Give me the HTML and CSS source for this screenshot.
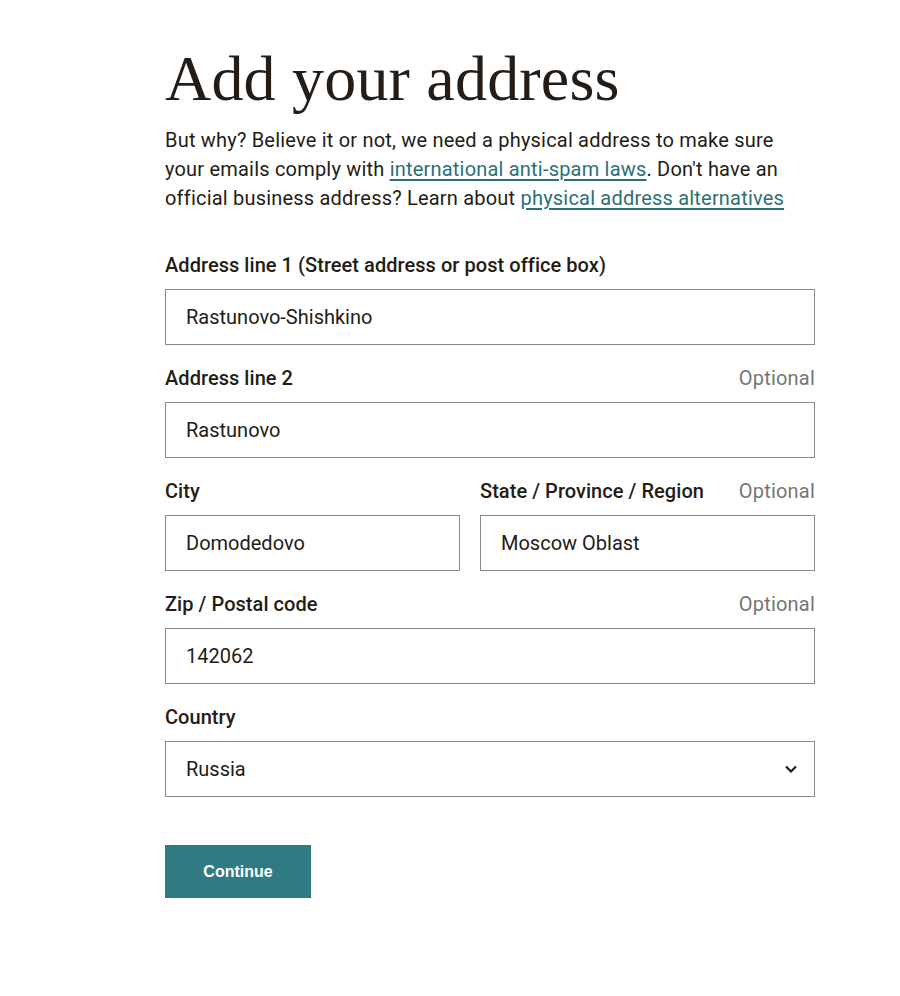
FILE: index.html
```html
<!DOCTYPE html>
<html lang="en">
<head>
<meta charset="utf-8">
<title>Add your address</title>
<link rel="stylesheet" href="styles.css">
</head>
<body>
<main class="page">
  <h1 class="title">Add your address</h1>
  <p class="intro">But why? Believe it or not, we need a physical address to make sure your emails comply with <a href="#" class="link">international anti-spam laws</a>. Don't have an official business address? Learn about <a href="#" class="link">physical address alternatives</a></p>

  <form class="form">
    <div class="field">
      <div class="label-row"><label class="label">Address line 1 (Street address or post office box)</label></div>
      <div class="input">Rastunovo-Shishkino</div>
    </div>
    <div class="field">
      <div class="label-row"><label class="label">Address line 2</label><span class="optional">Optional</span></div>
      <div class="input">Rastunovo</div>
    </div>
    <div class="row">
      <div class="field city">
        <div class="label-row"><label class="label">City</label></div>
        <div class="input">Domodedovo</div>
      </div>
      <div class="field state">
        <div class="label-row"><label class="label">State / Province / Region</label><span class="optional">Optional</span></div>
        <div class="input">Moscow Oblast</div>
      </div>
    </div>
    <div class="field">
      <div class="label-row"><label class="label">Zip / Postal code</label><span class="optional">Optional</span></div>
      <div class="input">142062</div>
    </div>
    <div class="field">
      <div class="label-row"><label class="label">Country</label></div>
      <div class="input select">
        <span>Russia</span>
        <svg class="chevron" width="14" height="10" viewBox="0 0 14 10"><path d="M2 2.5 L7 7.5 L12 2.5" fill="none" stroke="#241c15" stroke-width="2.2"/></svg>
      </div>
    </div>
    <div class="actions">
      <button type="button" class="btn">Continue</button>
    </div>
  </form>
</main>
</body>
</html>
```

FILE: styles.css
```css
html, body {
  margin: 0;
  padding: 0;
  background: #ffffff;
}
body {
  font-family: Roboto, "Liberation Sans", sans-serif;
  color: #241c15;
}
.page {
  width: 650px;
  margin-left: 165px;
  padding-top: 41px;
}
.title {
  font-family: "Liberation Serif", serif;
  font-weight: 400;
  font-size: 64px;
  line-height: 76px;
  margin: 0 0 9px 0;
  color: #241c15;
  letter-spacing: 0.2px;
}
.intro {
  font-size: 20px;
  letter-spacing: 0.2px;
  line-height: 29px;
  margin: 0 0 40px 0;
  color: #241c15;
}
.link {
  color: #2c6f78;
  text-decoration: underline;
  text-underline-offset: 3px;
}
.form {
  display: flex;
  flex-direction: column;
  gap: 21px;
}
.field {
  display: flex;
  flex-direction: column;
  gap: 11px;
}
.label-row {
  display: flex;
  justify-content: space-between;
  align-items: baseline;
  height: 25px;
}
.label {
  font-size: 20px;
  font-weight: 500;
  line-height: 25px;
  letter-spacing: 0.05px;
}
.optional {
  font-size: 20px;
  letter-spacing: 0.2px;
  line-height: 25px;
  color: #757575;
}
.input {
  box-sizing: border-box;
  height: 56px;
  border: 1px solid #8a8a8a;
  padding: 0 20px;
  display: flex;
  align-items: center;
  font-size: 20px;
}
.row {
  display: flex;
  gap: 20px;
}
.city { width: 295px; }
.state { flex: 1; }
.select {
  justify-content: space-between;
  padding-right: 16px;
}
.chevron { display: block; }
.actions {
  padding-top: 27px;
}
.btn {
  width: 146px;
  height: 53px;
  border: 0;
  background: #307a84;
  color: #ffffff;
  font-family: "Liberation Sans", Arial, sans-serif;
  font-weight: 700;
  font-size: 16px;
  padding: 0;
}
```
